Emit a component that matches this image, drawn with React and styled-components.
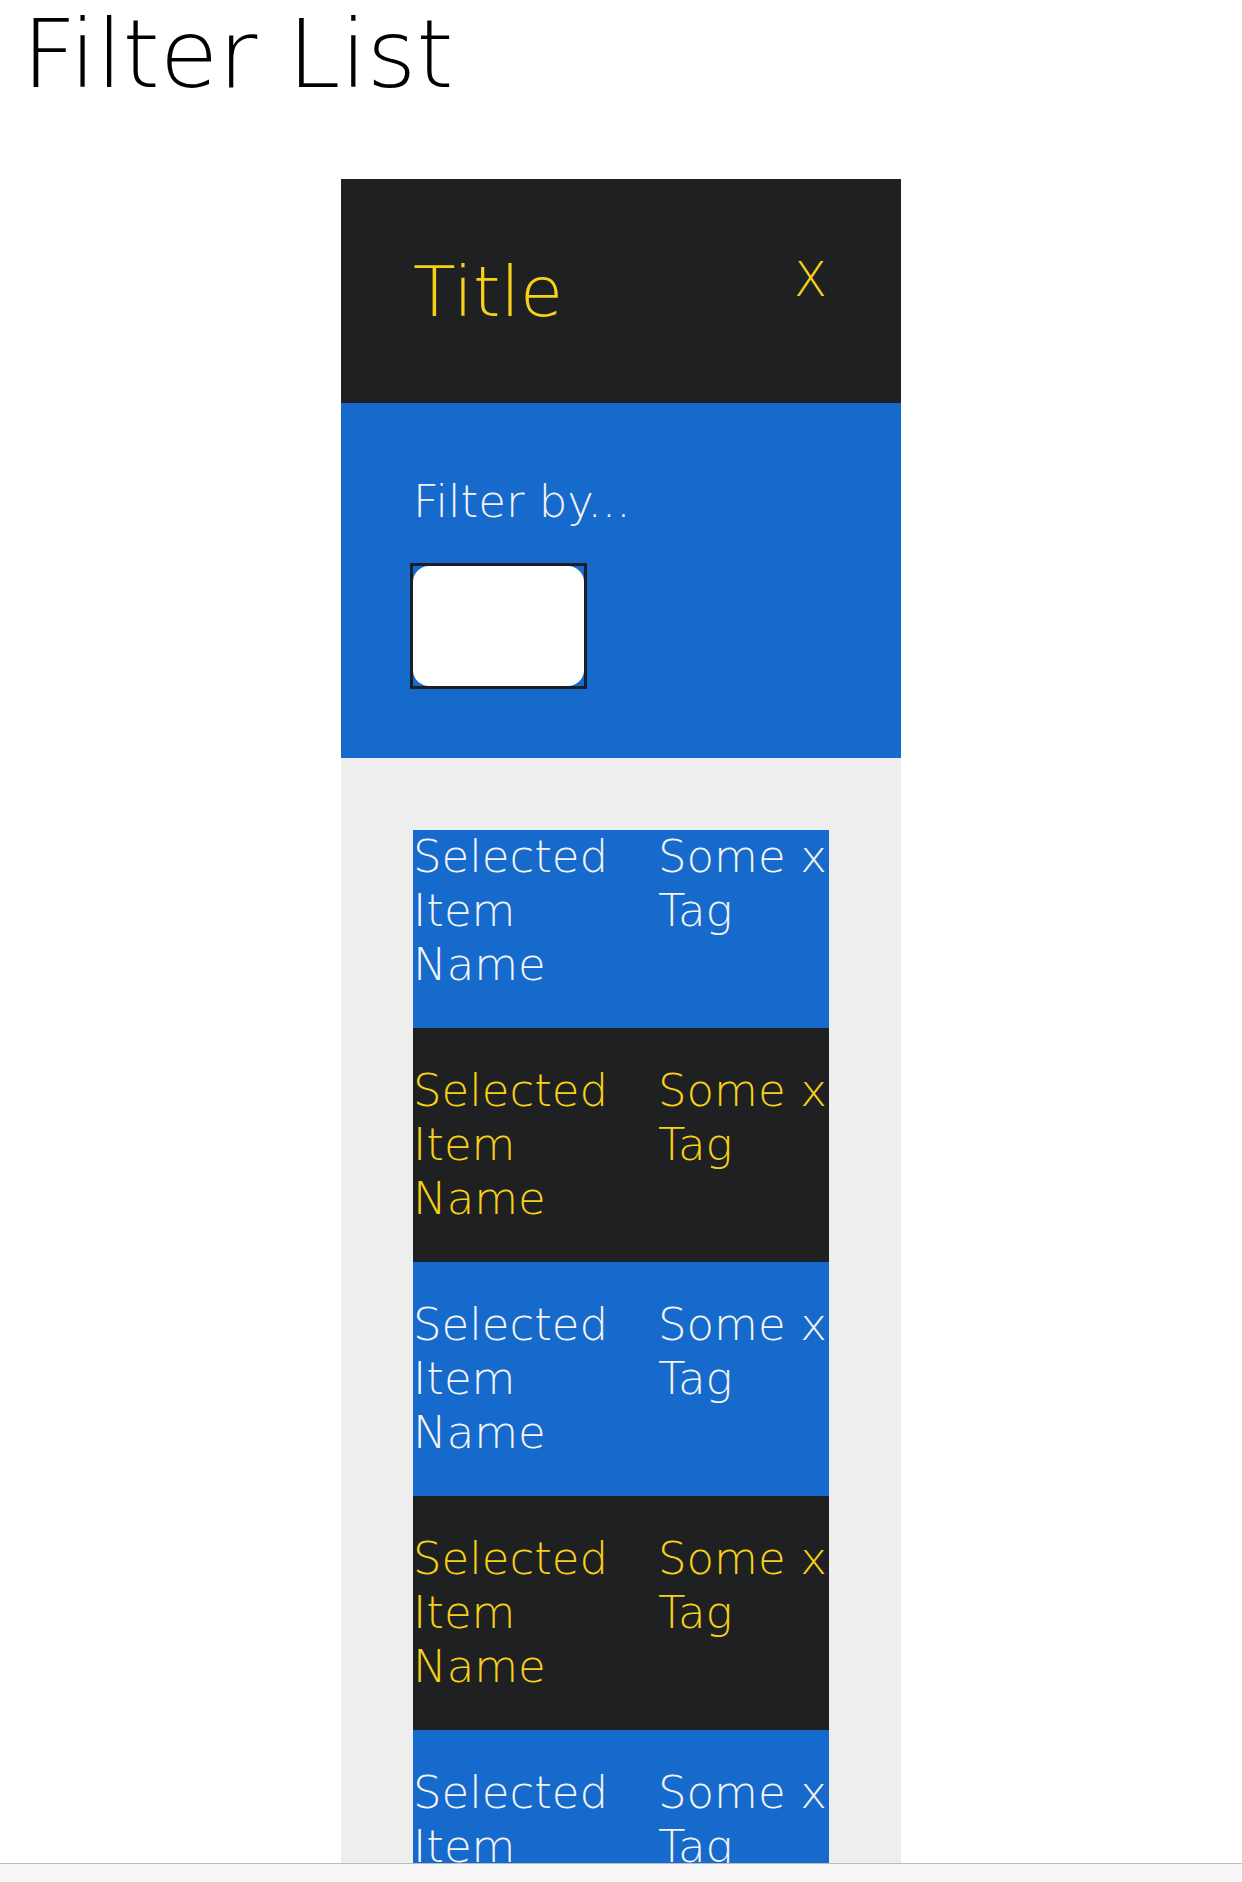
import React from 'react';
import styled, { createGlobalStyle } from 'styled-components';

const GlobalStyle = createGlobalStyle`
  html, body {
    margin: 0;
    padding: 0;
    background: #fff;
    font-family: 'DejaVu Sans', sans-serif;
    font-weight: 200;
  }
`;

const Page = styled.div`
  padding-bottom: 40px;
`;

const Heading = styled.h1`
  margin: 0;
  padding: 0 0 0 22px;
  font-size: 95px;
  font-weight: 200;
  line-height: 108px;
  color: #000;
`;

const Panel = styled.section`
  width: 560px;
  margin: 71px auto 0;
`;

const Header = styled.header`
  box-sizing: border-box;
  height: 224px;
  background: #1f2022;
  color: #f7d117;
  display: flex;
  justify-content: space-between;
  align-items: flex-start;
  padding: 72px 74px 0 72px;
`;

const Title = styled.h2`
  margin: 0;
  font-size: 70px;
  font-weight: 200;
  line-height: normal;
`;

const Close = styled.button`
  border: 0;
  background: none;
  padding: 0;
  color: inherit;
  font-family: inherit;
  font-size: 48px;
  font-weight: 200;
  line-height: normal;
  cursor: pointer;
`;

const FilterBox = styled.div`
  box-sizing: border-box;
  height: 355px;
  background: #166acc;
  padding: 72px 72px 0;
`;

const Label = styled.label`
  display: block;
  color: #f2f2f2;
  font-size: 45px;
  line-height: normal;
`;

const InputFrame = styled.div`
  width: 177px;
  height: 126px;
  box-sizing: border-box;
  margin: 35px 0 0 -3px;
  border: 3px solid #1b1e26;
  display: flex;
`;

const Input = styled.input`
  flex: 1;
  min-width: 0;
  border: 0;
  border-radius: 16px;
  background: #fff;
  outline: none;
`;

const List = styled.ul`
  list-style: none;
  margin: 0;
  padding: 72px;
  background: #eeeeee;
`;

const Item = styled.li`
  display: grid;
  grid-template-columns: 245px 1fr auto;
  align-items: start;
  padding: ${({ first }) => (first ? '0 0 36px' : '36px 0')};
  background: ${({ dark }) => (dark ? '#1f2022' : '#166acc')};
  color: ${({ dark }) => (dark ? '#f7d117' : '#f4f4f4')};
  font-size: 45px;
  line-height: 54px;
`;

const Name = styled.span``;
const Tag = styled.span``;

const Remove = styled.span`
  padding-right: 2px;
`;

const BottomBar = styled.div`
  position: fixed;
  left: 0;
  right: 0;
  bottom: 0;
  height: 18px;
  background: #f7f7f7;
  border-top: 1px solid #bcbcbc;
`;

const items = [0, 1, 2, 3, 4, 5];

export default function App() {
  return (
    <Page>
      <GlobalStyle />
      <Heading>Filter List</Heading>
      <Panel>
        <Header>
          <Title>Title</Title>
          <Close>X</Close>
        </Header>
        <FilterBox>
          <Label htmlFor="filter">Filter by...</Label>
          <InputFrame>
            <Input id="filter" />
          </InputFrame>
        </FilterBox>
        <List>
          {items.map((i) => (
            <Item key={i} first={i === 0} dark={i % 2 === 1}>
              <Name>Selected Item Name</Name>
              <Tag>Some Tag</Tag>
              <Remove>x</Remove>
            </Item>
          ))}
        </List>
      </Panel>
      <BottomBar />
    </Page>
  );
}
